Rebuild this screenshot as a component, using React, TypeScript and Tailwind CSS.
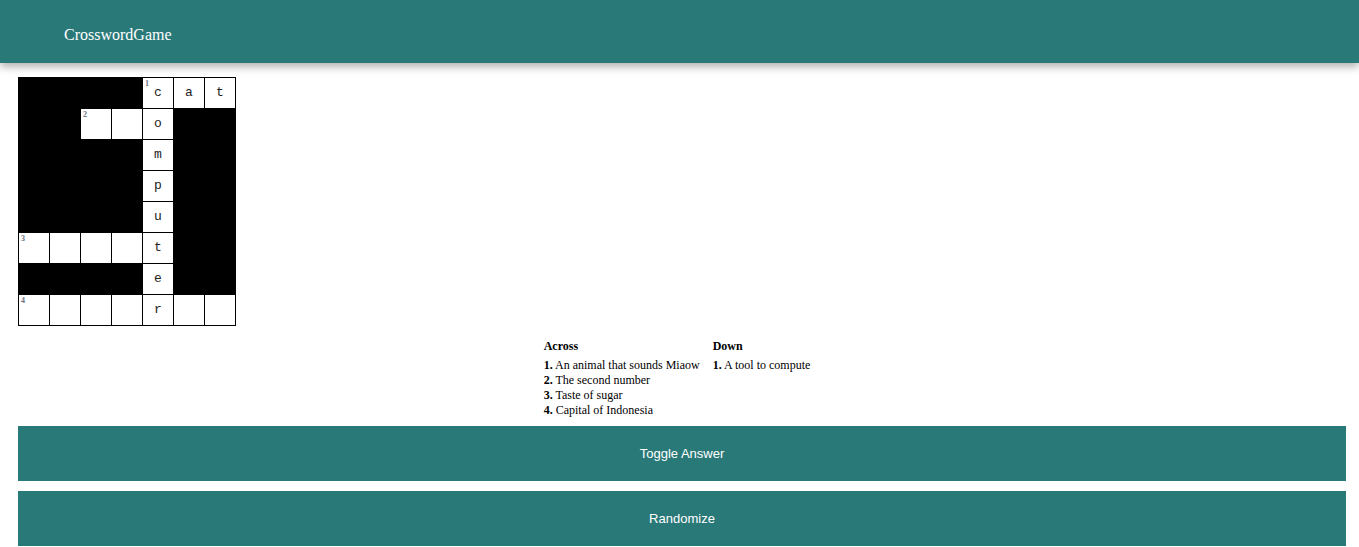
import React, { useState } from 'react';

// null = blocked square
const GRID: (string | null)[][] = [
  [null, null, null, null, 'c', 'a', 't'],
  [null, null, '', '', 'o', null, null],
  [null, null, null, null, 'm', null, null],
  [null, null, null, null, 'p', null, null],
  [null, null, null, null, 'u', null, null],
  ['', '', '', '', 't', null, null],
  [null, null, null, null, 'e', null, null],
  ['', '', '', '', 'r', '', ''],
];

const NUMBERS: Record<string, number> = { '0-4': 1, '1-2': 2, '5-0': 3, '7-0': 4 };

const ACROSS = [
  'An animal that sounds Miaow',
  'The second number',
  'Taste of sugar',
  'Capital of Indonesia',
];
const DOWN = ['A tool to compute'];

export default function App() {
  const [showAnswer, setShowAnswer] = useState(true);

  return (
    <div className="min-h-screen bg-white">
      <header className="h-[63px] bg-[#2a7979] flex items-center px-[64px] pt-[6px] shadow-[0_4px_8px_rgba(0,0,0,0.3)] relative z-10">
        <span className="text-white text-[16px] font-['Liberation_Serif',serif]">CrosswordGame</span>
      </header>

      <main className="pl-[18px] pr-[13px] pt-[14px]">
        <table className="border-collapse">
          <tbody>
            {GRID.map((row, r) => (
              <tr key={r}>
                {row.map((ch, c) => {
                  const num = NUMBERS[`${r}-${c}`];
                  return ch === null ? (
                    <td key={c} className="w-[31px] h-[31px] p-0 bg-black border border-black" />
                  ) : (
                    <td
                      key={c}
                      className="relative w-[31px] h-[31px] p-0 bg-white border border-black text-center align-middle font-['Liberation_Mono',monospace] text-[13px] text-[#222]"
                    >
                      {num && (
                        <span className="absolute left-[2px] top-[1px] text-[8px] leading-[9px] font-bold text-gray-500 font-['Liberation_Serif',serif]">
                          {num}
                        </span>
                      )}
                      {showAnswer ? ch : ''}
                    </td>
                  );
                })}
              </tr>
            ))}
          </tbody>
        </table>

        <div className="flex justify-center pt-[13px] pr-[10px] font-['Liberation_Serif',serif] text-[12px] leading-[15px] text-black">
          <div className="flex gap-[13px]">
            <div className="w-[156px]">
              <div className="font-bold mb-[4px]">Across</div>
              {ACROSS.map((t, i) => (
                <div key={i}>
                  <b>{i + 1}.</b> {t}
                </div>
              ))}
            </div>
            <div>
              <div className="font-bold mb-[4px]">Down</div>
              {DOWN.map((t, i) => (
                <div key={i}>
                  <b>{i + 1}.</b> {t}
                </div>
              ))}
            </div>
          </div>
        </div>

        <div className="flex flex-col gap-[10px] pt-[8px]">
          <button
            onClick={() => setShowAnswer(s => !s)}
            className="h-[55px] w-full bg-[#2a7979] text-white text-[13px] font-['Liberation_Sans',Arial,sans-serif]"
          >
            Toggle Answer
          </button>
          <button className="h-[55px] w-full bg-[#2a7979] text-white text-[13px] font-['Liberation_Sans',Arial,sans-serif]">
            Randomize
          </button>
        </div>
      </main>
    </div>
  );
}
